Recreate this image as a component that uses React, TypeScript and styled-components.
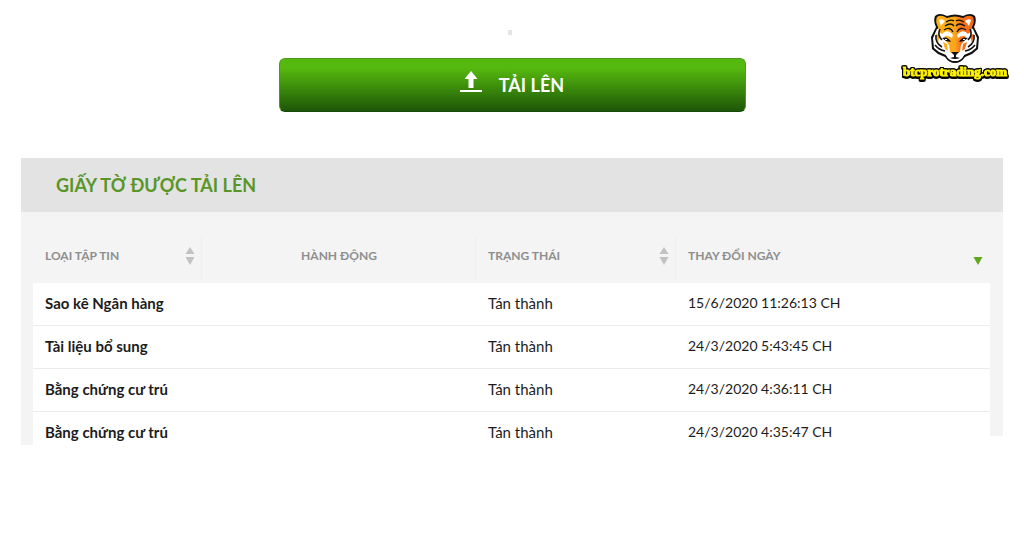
import React from "react";
import styled, { createGlobalStyle } from "styled-components";

const GlobalStyle = createGlobalStyle`
  * { box-sizing: border-box; }
  body {
    margin: 0;
    background: #fff;
    color: #1c1c1c;
    font-family: "Lato", sans-serif;
  }
`;

const Page = styled.div`
  min-width: 960px;
`;

const Top = styled.header`
  display: grid;
  grid-template-columns: 1fr minmax(467px, 45%) 1fr;
  padding: 12px 15px 46px;
`;

const Upload = styled.div`
  grid-column: 2;
  display: flex;
  flex-direction: column;
  align-items: center;
  padding-top: 18px;
`;

const Mark = styled.span`
  width: 4px;
  height: 5px;
  margin: 0 4px 23px 0;
  background: #e4e4e4;
`;

const UploadButton = styled.button`
  display: flex;
  align-items: center;
  justify-content: center;
  gap: 17px;
  width: 100%;
  height: 54px;
  padding: 0;
  border: 1px solid #4c9a1c;
  border-bottom-color: #17490a;
  border-radius: 6px;
  background: linear-gradient(#55b80f, #55b80f 18%, #1d5607);
  color: #fff;
  font: 700 18px/24px "Lato", sans-serif;
  cursor: pointer;

  svg { margin-bottom: 6px; }
`;

const Brand = styled.a`
  grid-column: 3;
  justify-self: end;
  display: flex;
  flex-direction: column;
  align-items: center;
  width: 108px;
  text-decoration: none;
`;

const BrandName = styled.span`
  color: #fff200;
  font: 700 13px/16px "Liberation Serif", serif;
  paint-order: stroke fill;
  -webkit-text-stroke: 1px #fff200;
  filter: drop-shadow(1px 0 0 #000) drop-shadow(-1px 0 0 #000)
    drop-shadow(0 1px 0 #000) drop-shadow(0 -1px 0 #000)
    drop-shadow(0 1px 0 #000);
`;

const Panel = styled.section`
  margin: 0 21px;
`;

const PanelTitle = styled.h2`
  margin: 0;
  padding: 15px 35px;
  background: #e3e3e3;
  color: #5a9527;
  font: 700 18px/24px "Lato", sans-serif;
`;

const PanelBody = styled.div`
  display: flex;
`;

const Rail = styled.div<{ $width: number; $gap?: number }>`
  flex: 0 0 ${(p) => p.$width}px;
  margin-bottom: ${(p) => p.$gap ?? 0}px;
  background: #f4f4f4;
`;

const Table = styled.table`
  flex: 1;
  width: 100%;
  table-layout: fixed;
  border-collapse: separate;
  border-spacing: 0;
`;

const Col = styled.col<{ $width?: number }>`
  width: ${(p) => (p.$width ? `${p.$width}px` : "auto")};
`;

const HeadCell = styled.th<{ $center?: boolean }>`
  height: 71px;
  padding: ${(p) => (p.$center ? "16px 12px 0" : "16px 7px 0 12px")};
  background:
    linear-gradient(#efefef, #efefef) right 24px / 1px 44px no-repeat,
    #f4f4f4;
  color: #8e8e8e;
  font: 700 12px/20px "Lato", sans-serif;
  text-align: ${(p) => (p.$center ? "center" : "left")};

  &:last-child { background: #f4f4f4; }
`;

const HeadContent = styled.div`
  display: flex;
  align-items: center;
  justify-content: space-between;
`;

const SortButton = styled.button`
  display: flex;
  padding: 0;
  border: 0;
  background: none;
  cursor: pointer;
`;

const Cell = styled.td<{ $small?: boolean }>`
  height: 43px;
  padding: 0 12px 2px;
  border-bottom: 1px solid #ebebeb;
  font-size: ${(p) => (p.$small ? 14 : 15)}px;
  line-height: 20px;

  tr:last-child > & {
    height: 33px;
    padding: 10px 12px 3px;
    border-bottom: 0;
    vertical-align: top;
  }
`;

const Name = styled(Cell)`
  font-weight: 700;
`;

const UploadIcon = () => (
  <svg width="22" height="22" viewBox="0 0 22 22" fill="#fff" aria-hidden="true">
    <path d="M11 0 17.5 8H13.5V17H8.5V8H4.5Z" />
    <path d="M0 19h22v2H0Z" />
  </svg>
);

const SortIcon = ({ active = false }: { active?: boolean }) => (
  <svg width="10" height="18" viewBox="0 0 10 18" aria-hidden="true">
    {!active && <path d="M5 0 9.5 7h-9Z" fill="#c2c2c2" />}
    <path d="M0.5 10h9L5 18Z" fill={active ? "#5fa81e" : "#c2c2c2"} />
  </svg>
);

const Tiger = () => (
  <svg width="50" height="52" viewBox="0 0 50 52" aria-hidden="true">
    <defs>
      <linearGradient id="fur" x1="0" x2="1" y1="0" y2="0">
        <stop offset="0" stopColor="#fdb515" />
        <stop offset="0.5" stopColor="#fba51c" />
        <stop offset="0.65" stopColor="#f5741e" />
        <stop offset="1" stopColor="#f2661a" />
      </linearGradient>
    </defs>
    <path fill="#111" d="M5 4Q9 0 17 4Q25 1 33 4Q41 0 45 4Q47 9 44 15L49 25L48 37L42 42L35 45Q31 51 25 51Q19 51 15 45L8 42L2 37L1 25L6 15Q3 9 5 4Z" />
    <path fill="#fff" d="M7 17L14 14H36L43 17L47 26L46 36L41 40L34 43Q31 49 25 49Q19 49 16 43L9 40L4 36L3 26Z" />
    <path fill="url(#fur)" d="M7 5Q11 2 17 6Q25 3 33 6Q39 2 43 5Q45 9 42 15L41 20L36 23L34 29L31 33L30 40L25 43L20 40L19 33L16 29L14 23L9 20L8 15Q5 9 7 5Z" />
    <path fill="url(#fur)" d="M13 30L17 32L18 39L15 37ZM37 30L33 32L32 39L35 37ZM6 22L10 23L8 31ZM44 22L40 23L42 31Z" />
    <path fill="#fff" d="M9 8Q12 6 15 9L11 14ZM41 8Q38 6 35 9L39 14Z" />
    <path fill="#fff" d="M12 22Q17 16 23 23L22 26Q17 22 11 26ZM38 22Q33 16 27 23L28 26Q33 22 39 26Z" />
    <path fill="#fff" d="M18 38Q21 42 25 42Q29 42 32 38L34 43Q31 49 25 49Q19 49 16 43Z" />
    <path fill="#111" d="M12 26Q18 24 21 30L16 29ZM38 26Q32 24 29 30L34 29ZM21 40H29L26 43V45L30 46Q25 48 20 46L24 45V43Z" />
    <path fill="#fff" d="M15 27h2v1h-2ZM33 27h2v1h-2Z" />
    <path fill="none" stroke="#111" strokeWidth="1.3" d="M16 10Q21 7 24 9M34 10Q29 7 26 9M15 14Q21 10 24 14M35 14Q29 10 26 14M14 18Q20 14 23 20M36 18Q30 14 27 20" />
    <path fill="none" stroke="#111" strokeWidth="1.6" d="M10 17Q7 23 12 28M40 17Q43 23 38 28M6 23Q5 31 12 35M44 23Q45 31 38 35M5 33Q9 38 15 39M45 33Q41 38 35 39" />
  </svg>
);

const rows = [
  { name: "Sao kê Ngân hàng", status: "Tán thành", date: "15/6/2020 11:26:13 CH" },
  { name: "Tài liệu bổ sung", status: "Tán thành", date: "24/3/2020 5:43:45 CH" },
  { name: "Bằng chứng cư trú", status: "Tán thành", date: "24/3/2020 4:36:11 CH" },
  { name: "Bằng chứng cư trú", status: "Tán thành", date: "24/3/2020 4:35:47 CH" },
];

export default function App() {
  return (
    <Page>
      <GlobalStyle />
      <Top>
        <Upload>
          <Mark />
          <UploadButton type="button">
            <UploadIcon />
            TẢI LÊN
          </UploadButton>
        </Upload>
        <Brand href="#">
          <Tiger />
          <BrandName>btcprotrading.com</BrandName>
        </Brand>
      </Top>
      <Panel>
        <PanelTitle>GIẤY TỜ ĐƯỢC TẢI LÊN</PanelTitle>
        <PanelBody>
          <Rail $width={12} />
          <Table>
            <colgroup>
              <Col $width={169} />
              <Col $width={274} />
              <Col $width={200} />
              <Col />
            </colgroup>
            <thead>
              <tr>
                <HeadCell>
                  <HeadContent>
                    LOẠI TẬP TIN
                    <SortButton type="button" aria-label="LOẠI TẬP TIN"><SortIcon /></SortButton>
                  </HeadContent>
                </HeadCell>
                <HeadCell $center>HÀNH ĐỘNG</HeadCell>
                <HeadCell>
                  <HeadContent>
                    TRẠNG THÁI
                    <SortButton type="button" aria-label="TRẠNG THÁI"><SortIcon /></SortButton>
                  </HeadContent>
                </HeadCell>
                <HeadCell>
                  <HeadContent>
                    THAY ĐỔI NGÀY
                    <SortButton type="button" aria-label="THAY ĐỔI NGÀY"><SortIcon active /></SortButton>
                  </HeadContent>
                </HeadCell>
              </tr>
            </thead>
            <tbody>
              {rows.map((row) => (
                <tr key={row.date}>
                  <Name>{row.name}</Name>
                  <Cell />
                  <Cell>{row.status}</Cell>
                  <Cell $small>{row.date}</Cell>
                </tr>
              ))}
            </tbody>
          </Table>
          <Rail $width={13} $gap={9} />
        </PanelBody>
      </Panel>
    </Page>
  );
}
